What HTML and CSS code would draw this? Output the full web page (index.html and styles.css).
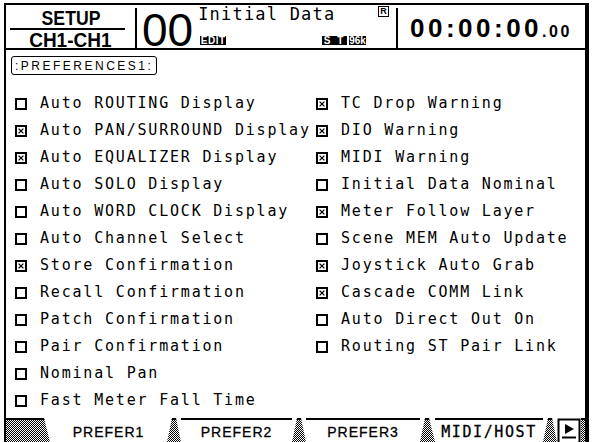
FILE: index.html
```html
<!DOCTYPE html>
<html lang="en">
<head>
    <meta charset="UTF-8">
    <meta name="viewport" content="width=device-width, initial-scale=1.0">
    <title>SETUP - Preferences 1</title>
    <link rel="stylesheet" href="styles.css">
</head>
<body>

<!-- checkbox glyphs -->
<svg class="sprite" width="0" height="0">
    <symbol id="cb-off" viewBox="0 0 12 12">
        <rect x="1" y="1" width="10" height="10" fill="#fff" stroke="#000" stroke-width="2"/>
    </symbol>
    <symbol id="cb-on" viewBox="0 0 12 12">
        <rect x="1" y="1" width="10" height="10" fill="#fff" stroke="#000" stroke-width="2"/>
        <path d="M3.6 3.6l4.8 4.8M8.4 3.6l-4.8 4.8" stroke="#000" stroke-width="1.3"/>
    </symbol>
</svg>

<div class="screen">
    <div class="header">
        <div class="setup">
            <div class="setup-title"><span>SETUP</span></div>
            <div class="setup-ch"><span>CH1-CH1</span></div>
        </div>
        <div class="vdiv"></div>
        <div class="scene">
            <div class="scene-num">00</div>
            <div class="scene-info">
                <div class="scene-top">
                    <span class="scene-name">Initial Data</span>
                    <span class="protect">R</span>
                </div>
                <div class="scene-bottom">
                    <span class="inv edit">EDIT</span>
                    <span class="flags">
                        <span class="inv st">S T</span>
                        <span class="inv rate">96k</span>
                    </span>
                </div>
            </div>
        </div>
        <div class="vdiv"></div>
        <div class="clock">00:00:00<span class="frames">.00</span></div>
    </div>

    <div class="page">
        <div class="page-title">:PREFERENCES1:</div>
        <div class="columns">
            <ul class="opts left">
                <li><svg class="cb"><use href="#cb-off"/></svg>Auto ROUTING Display</li>
                <li><svg class="cb"><use href="#cb-on"/></svg>Auto PAN/SURROUND Display</li>
                <li><svg class="cb"><use href="#cb-on"/></svg>Auto EQUALIZER Display</li>
                <li><svg class="cb"><use href="#cb-off"/></svg>Auto SOLO Display</li>
                <li><svg class="cb"><use href="#cb-off"/></svg>Auto WORD CLOCK Display</li>
                <li><svg class="cb"><use href="#cb-off"/></svg>Auto Channel Select</li>
                <li><svg class="cb"><use href="#cb-on"/></svg>Store Confirmation</li>
                <li><svg class="cb"><use href="#cb-off"/></svg>Recall Confirmation</li>
                <li><svg class="cb"><use href="#cb-off"/></svg>Patch Confirmation</li>
                <li><svg class="cb"><use href="#cb-off"/></svg>Pair Confirmation</li>
                <li><svg class="cb"><use href="#cb-off"/></svg>Nominal Pan</li>
                <li><svg class="cb"><use href="#cb-off"/></svg>Fast Meter Fall Time</li>
            </ul>
            <ul class="opts right">
                <li><svg class="cb"><use href="#cb-on"/></svg>TC Drop Warning</li>
                <li><svg class="cb"><use href="#cb-on"/></svg>DIO Warning</li>
                <li><svg class="cb"><use href="#cb-on"/></svg>MIDI Warning</li>
                <li><svg class="cb"><use href="#cb-off"/></svg>Initial Data Nominal</li>
                <li><svg class="cb"><use href="#cb-on"/></svg>Meter Follow Layer</li>
                <li><svg class="cb"><use href="#cb-off"/></svg>Scene MEM Auto Update</li>
                <li><svg class="cb"><use href="#cb-on"/></svg>Joystick Auto Grab</li>
                <li><svg class="cb"><use href="#cb-on"/></svg>Cascade COMM Link</li>
                <li><svg class="cb"><use href="#cb-off"/></svg>Auto Direct Out On</li>
                <li><svg class="cb"><use href="#cb-off"/></svg>Routing ST Pair Link</li>
            </ul>
        </div>
    </div>

    <div class="tabs">
        <span class="dither lead"></span>
        <span class="tab active t1">PREFER1</span>
        <span class="dither sep"></span>
        <span class="tab t2">PREFER2</span>
        <span class="dither sep"></span>
        <span class="tab t3">PREFER3</span>
        <span class="dither sep wide"></span>
        <span class="tab mono t4">MIDI/HOST</span>
        <span class="dither sep"></span>
        <span class="next">
            <svg width="24" height="24" viewBox="0 0 24 24">
                <path d="M1.5 24V1.5h21V24" fill="none" stroke="#000" stroke-width="2"/>
                <path d="M8 6l9 5-9 5z" fill="#000"/>
                <path d="M5 19.5h14" stroke="#000" stroke-width="2"/>
            </svg>
        </span>
        <span class="dither tail"></span>
    </div>
</div>

</body>
</html>
```

FILE: styles.css
```css
body {
    margin: 0;
    background-color: #fff;
    color: #000;
    font-family: "DejaVu Sans Mono", monospace;
}

.sprite {
    position: absolute;
    width: 0;
    height: 0;
}

.screen {
    width: 585px;
    height: 439px;
    margin: 3px 0 0 4px;
    border-top: 2px solid #000;
    border-left: 2px solid #000;
    border-right: 4px solid #000;
    box-sizing: border-box;
    display: flex;
    flex-direction: column;
}

/* top status strip */
.header {
    height: 45px;
    border-bottom: 2px solid #000;
    box-sizing: border-box;
    display: flex;
    flex-shrink: 0;
}

.vdiv {
    width: 2px;
    margin-top: 3px;
    background-color: #000;
    flex-shrink: 0;
}

.setup {
    width: 129px;
    font-family: "Liberation Sans", sans-serif;
    font-weight: bold;
    text-align: center;
}

/* the LCD face is condensed, so squeeze the bold sans a little */
.setup span {
    display: inline-block;
}

.setup-title {
    font-size: 21px;
    line-height: 21px;
    padding: 2px 0 0 7px;
    margin: 0 10px 0 4px;
    border-bottom: 2px solid #000;
}

.setup-title span {
    transform: scaleX(0.84);
}

.setup-ch {
    font-size: 20px;
    line-height: 16px;
    padding-top: 2px;
}

.setup-ch span {
    transform: scaleX(0.95);
}

.scene {
    width: 259px;
    display: flex;
}

.scene-num {
    font-family: "Liberation Sans", sans-serif;
    font-size: 46px;
    line-height: 33px;
    padding: 9px 0 0 5px;
}

.scene-info {
    flex: 1;
    margin-left: 4px;
    display: flex;
    flex-direction: column;
}

.scene-top {
    display: flex;
    justify-content: space-between;
    align-items: flex-start;
    margin-top: 1px;
    padding-right: 7px;
}

.scene-name {
    font-size: 17px;
    line-height: 16px;
    letter-spacing: 1.2px;
    margin-left: 1px;
}

.protect {
    width: 11px;
    height: 11px;
    border: 1px solid #000;
    box-sizing: border-box;
    font-family: "Liberation Sans", sans-serif;
    font-weight: bold;
    font-size: 9px;
    line-height: 9px;
    text-align: center;
}

.scene-bottom {
    margin-top: auto;
    margin-bottom: 3px;
    display: flex;
    justify-content: space-between;
    padding: 0 30px 0 3px;
}

.flags {
    display: flex;
    gap: 2px;
}

.inv {
    background-color: #000;
    color: #fff;
    font-family: "Liberation Sans", sans-serif;
    font-weight: bold;
    font-size: 10px;
    line-height: 9px;
    height: 9px;
    text-align: center;
}

.edit {
    width: 26px;
    letter-spacing: 0.5px;
}

.st {
    width: 25px;
    letter-spacing: 2px;
}

.rate {
    width: 17px;
}

.clock {
    flex: 1;
    font-family: "Liberation Sans", sans-serif;
    font-weight: bold;
    font-size: 26px;
    line-height: 26px;
    letter-spacing: 3.5px;
    padding: 10px 0 0 12px;
    white-space: nowrap;
}

.frames {
    font-size: 16px;
    letter-spacing: 2.5px;
}

/* page body */
.page {
    flex: 1;
    padding: 5px 0 0 5px;
}

.page-title {
    display: inline-block;
    border: 1px solid #000;
    border-radius: 3px;
    padding: 2px 3px 1px 3px;
    font-family: "Liberation Sans", sans-serif;
    font-size: 12px;
    line-height: 14px;
    letter-spacing: 2.5px;
}

.columns {
    display: flex;
    margin-top: 15px;
    padding-left: 4px;
}

.opts {
    list-style: none;
    margin: 0;
    padding: 0;
}

.opts.left {
    width: 301px;
}

.opts li {
    height: 27px;
    display: flex;
    align-items: center;
    font-size: 15px;
    line-height: 27px;
    letter-spacing: 1.8px;
    white-space: nowrap;
}

.cb {
    width: 12px;
    height: 12px;
    margin-right: 13px;
    flex-shrink: 0;
}

/* tab strip */
.tabs {
    height: 24px;
    display: flex;
    flex-shrink: 0;
}

.dither {
    background-color: #fff;
    background-image:
        linear-gradient(#000, #000),
        repeating-conic-gradient(#000 0 25%, #fff 0 50%);
    background-size: 100% 2px, 2px 2px;
    background-repeat: no-repeat, repeat;
}

.lead {
    width: 44px;
    clip-path: polygon(0 0, 38px 0, 100% 100%, 0 100%);
}

.sep {
    width: 14px;
    clip-path: polygon(5px 0, 9px 0, 100% 100%, 0 100%);
}

.sep.wide {
    width: 15px;
}

.tail {
    width: 4px;
}

.tab {
    height: 24px;
    box-sizing: border-box;
    padding-top: 3px;
    border-top: 2px solid #000;
    font-family: "Liberation Sans", sans-serif;
    font-size: 14px;
    line-height: 19px;
    letter-spacing: 1px;
    text-align: center;
    -webkit-text-stroke: 0.3px #000;
}

.tab.active {
    border-top: none;
    padding-top: 5px;
}

.tab.mono {
    font-family: "DejaVu Sans Mono", monospace;
    font-size: 15px;
    letter-spacing: 1.6px;
}

.t1 { width: 117px; }
.t2 { width: 111px; }
.t3 { width: 114px; }
.t4 { width: 108px; }

.next {
    width: 24px;
    height: 24px;
}

.next svg {
    display: block;
}
```
